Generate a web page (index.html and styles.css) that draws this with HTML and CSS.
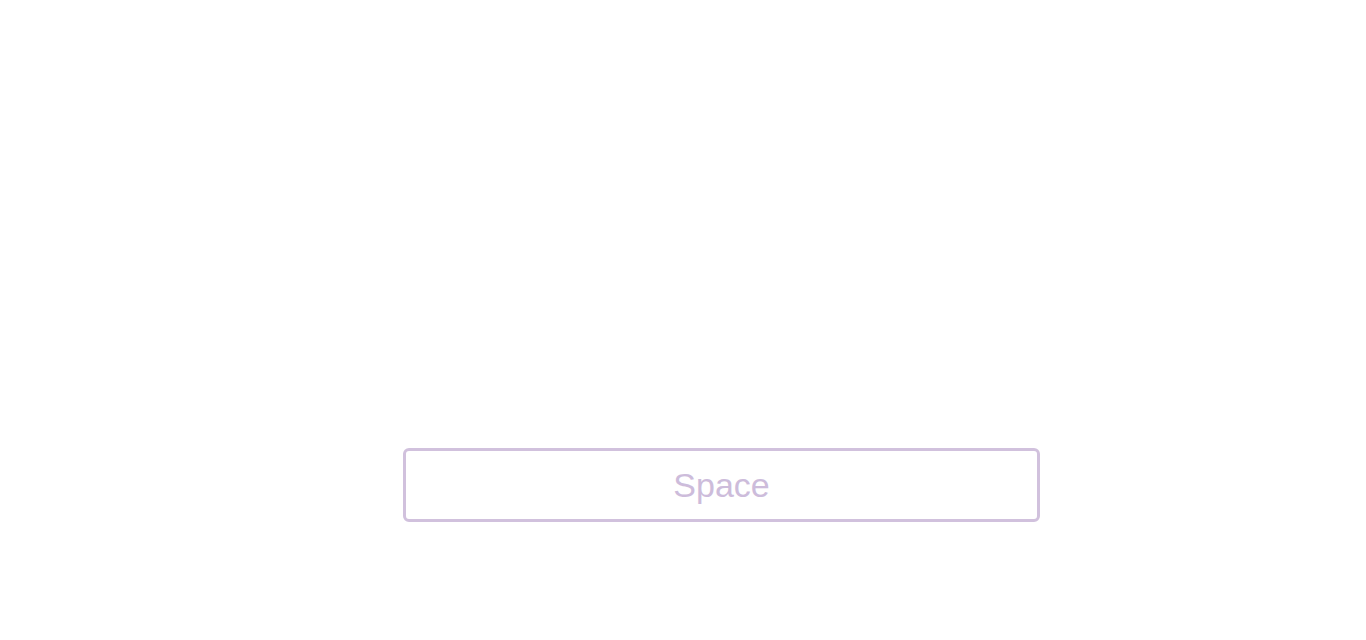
FILE: index.html
```html
<!DOCTYPE html>
<html>
<head>
<meta charset="utf-8">
<link rel="stylesheet" href="styles.css">
</head>
<body>
<main class="stage">
  <button class="space-key" type="button">Space</button>
</main>
</body>
</html>
```
FILE: styles.css
```css
html, body {
  margin: 0;
  padding: 0;
  background: #ffffff;
}
.stage {
  padding: 448px 0 0 403px;
}
.space-key {
  display: flex;
  align-items: center;
  justify-content: center;
  box-sizing: border-box;
  width: 637px;
  height: 74px;
  margin: 0;
  padding: 0;
  background: #ffffff;
  border: 3px solid #d1c1dd;
  border-radius: 6px;
  color: #cdbcdb;
  font-family: "Liberation Sans", Arial, sans-serif;
  font-size: 34px;
}
```
